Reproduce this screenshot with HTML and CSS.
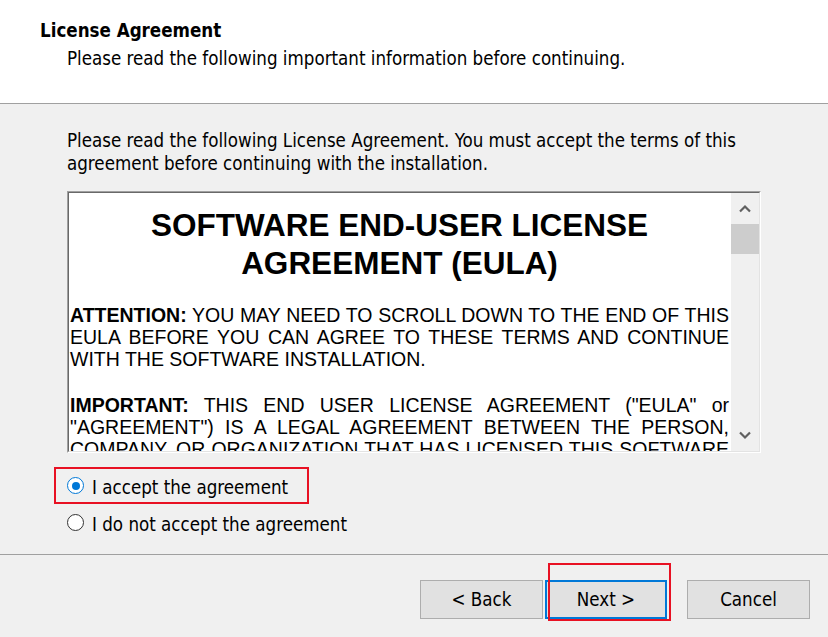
FILE: index.html
```html
<!DOCTYPE html>
<html>
<head>
<meta charset="utf-8">
<link rel="stylesheet" href="styles.css">
</head>
<body>
<div class="wizard">
  <div class="header">
    <div class="title">License Agreement</div>
    <div class="subtitle">Please read the following important information before continuing.</div>
  </div>
  <div class="main">
    <p class="intro">Please read the following License Agreement. You must accept the terms of this agreement before continuing with the installation.</p>
    <div class="memo">
      <div class="memo-inner">
        <div class="memo-text">
          <h2 class="eula-title">SOFTWARE END-USER LICENSE AGREEMENT (EULA)</h2>
          <p class="eula-p"><b>ATTENTION:</b> YOU MAY NEED TO SCROLL DOWN TO THE END OF THIS EULA BEFORE YOU CAN AGREE TO THESE TERMS AND CONTINUE WITH THE SOFTWARE INSTALLATION.</p>
          <p class="eula-p"><b>IMPORTANT:</b> THIS END USER LICENSE AGREEMENT ("EULA" or "AGREEMENT") IS A LEGAL AGREEMENT BETWEEN THE PERSON, COMPANY, OR ORGANIZATION THAT HAS LICENSED THIS SOFTWARE AND THE COMPANY THAT OWNS IT.</p>
        </div>
        <div class="scrollbar">
          <div class="sb-btn">
            <svg width="12" height="9" viewBox="0 0 12 9"><path d="M1 7.5 L6 2.5 L11 7.5" fill="none" stroke="#606060" stroke-width="2.2"/></svg>
          </div>
          <div class="sb-thumb"></div>
          <div class="sb-track"></div>
          <div class="sb-btn">
            <svg width="12" height="9" viewBox="0 0 12 9"><path d="M1 1.5 L6 6.5 L11 1.5" fill="none" stroke="#606060" stroke-width="2.2"/></svg>
          </div>
        </div>
      </div>
    </div>
    <div class="radios">
      <label class="radio highlight"><span class="dot checked"></span><span class="radio-label">I accept the agreement</span></label>
      <label class="radio"><span class="dot"></span><span class="radio-label">I do not accept the agreement</span></label>
    </div>
  </div>
  <div class="footer">
    <div class="btn">&lt; Back</div>
    <div class="btn-wrap"><div class="btn default">Next &gt;</div></div>
    <div class="btn cancel">Cancel</div>
  </div>
</div>
</body>
</html>
```

FILE: styles.css
```css
html, body {
  margin: 0;
  padding: 0;
}
body {
  width: 828px;
  height: 637px;
  overflow: hidden;
  background: #f0f0f0;
  font-family: "DejaVu Sans Condensed", "DejaVu Sans", sans-serif;
  font-size: 18.6px;
  color: #000;
}
.wizard {
  display: flex;
  flex-direction: column;
  height: 637px;
}
.header {
  background: #fff;
  border-bottom: 1px solid #a0a0a0;
  padding: 20px 0 0 40px;
  box-sizing: border-box;
  height: 104px;
}
.title {
  font-weight: bold;
  line-height: 22px;
}
.subtitle {
  padding-left: 27px;
  line-height: 22px;
  margin-top: 6px;
}
.main {
  padding: 0 0 0 67px;
  height: 451px;
  box-sizing: border-box;
  border-bottom: 1px solid #a0a0a0;
}
.intro {
  margin: 25px 0 0 0;
  width: 700px;
  line-height: 23px;
}
.memo {
  margin-top: 16px;
  width: 694px;
  height: 262px;
  box-sizing: border-box;
  border: 1px solid;
  border-color: #a0a0a0 #ffffff #ffffff #a0a0a0;
}
.memo-inner {
  height: 100%;
  box-sizing: border-box;
  border: 1px solid;
  border-color: #696969 #e3e3e3 #e3e3e3 #696969;
  background: #fff;
  display: flex;
  overflow: hidden;
}
.memo-text {
  flex: 1;
  padding: 0 2px 0 1px;
  font-family: "Liberation Sans", Arial, sans-serif;
  overflow: hidden;
}
.eula-title {
  margin: 13px 0 0 0;
  text-align: center;
  font-size: 31.5px;
  line-height: 38px;
  font-weight: bold;
  padding: 0 40px;
}
.eula-p {
  margin: 22px 0 0 0;
  font-size: 19.5px;
  line-height: 22px;
  text-align: justify;
}
.eula-p + .eula-p {
  margin-top: 24px;
}
.scrollbar {
  width: 28px;
  background: #f0f0f0;
  display: flex;
  flex-direction: column;
}
.sb-btn {
  height: 31px;
  display: flex;
  align-items: center;
  justify-content: center;
}
.sb-thumb {
  height: 30px;
  background: #cdcdcd;
}
.sb-track {
  flex: 1;
}
.radios {
  margin-top: 14px;
  margin-left: -13px;
  display: flex;
  flex-direction: column;
}
.radio {
  display: flex;
  align-items: center;
  height: 37px;
  padding-left: 13px;
  box-sizing: border-box;
  width: 330px;
  gap: 8px;
  line-height: 22px;
}
.radio-label {
  padding-top: 4px;
}
.highlight {
  width: 255px;
  border: 2px solid #e81123;
  padding-left: 11px;
}
.dot {
  width: 17px;
  height: 17px;
  border-radius: 50%;
  border: 1px solid #333;
  background: #fff;
  box-sizing: border-box;
  flex: none;
  position: relative;
}
.dot.checked {
  border-color: #0078d7;
}
.dot.checked::after {
  content: "";
  position: absolute;
  left: 3.5px;
  top: 3.5px;
  width: 8px;
  height: 8px;
  border-radius: 50%;
  background: #0078d7;
}
.footer {
  flex: 1;
  display: flex;
  align-items: flex-start;
  padding: 25px 0 0 420px;
}
.btn {
  width: 123px;
  height: 39px;
  box-sizing: border-box;
  background: #e1e1e1;
  border: 1px solid #adadad;
  display: flex;
  align-items: center;
  justify-content: center;
  line-height: 22px;
  padding-top: 1px;
}
.btn-wrap {
  margin-left: 2px;
  position: relative;
}
.btn-wrap::after {
  content: "";
  position: absolute;
  left: 3px;
  top: -17px;
  width: 123px;
  height: 58px;
  box-sizing: border-box;
  border: 2px solid #e81123;
}
.btn.default {
  width: 122px;
  border: 2px solid #0078d7;
}
.cancel {
  margin-left: 20px;
}
```
